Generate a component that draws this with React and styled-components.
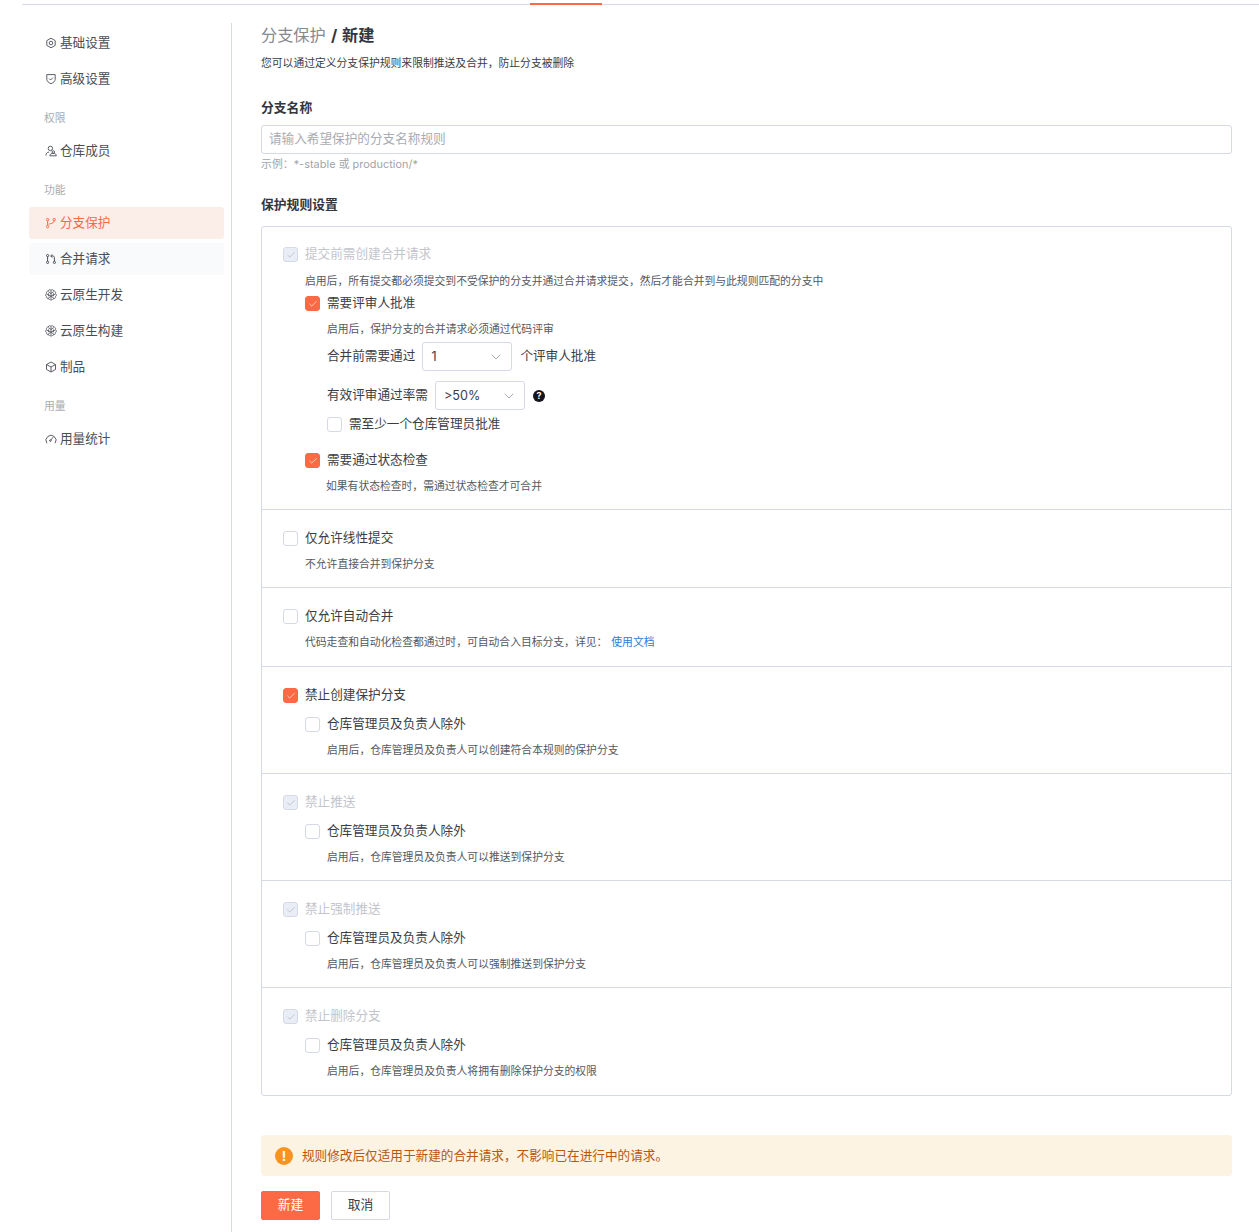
import styled, { createGlobalStyle } from "styled-components";
import { Check, ChevronDown } from "lucide-react";

const GlobalStyle = createGlobalStyle`
  * {
    box-sizing: border-box;
  }
  html,
  body {
    margin: 0;
    padding: 0;
    background: #fff;
    overflow: hidden;
  }
  body {
    font-family: "Inter", "Noto Sans CJK SC", sans-serif;
    font-weight: 400;
    color: #3a3d44;
  }
`;

const ORANGE = "#fc6a45";
const LINE = "#d5d9e6";

const Page = styled.div`
  height: 1232px;
  display: flex;
  flex-direction: column;
`;

const TopBar = styled.div`
  margin-left: 22px;
  height: 5px;
  padding-left: 508px;
  border-bottom: 1px solid ${LINE};
`;

const TabMark = styled.div`
  width: 72px;
  height: 2px;
  margin-top: 3px;
  background: ${ORANGE};
`;

const Body = styled.div`
  flex: 1;
  display: flex;
  margin-top: 18px;
  min-height: 0;
`;

const Sidebar = styled.nav`
  width: 232px;
  padding: 4px 7px 0 29px;
  border-right: 1px solid ${LINE};
  flex-shrink: 0;
`;

const NavItem = styled.div`
  height: 32px;
  margin-bottom: 4px;
  padding: 0 0 3px 16px;
  display: flex;
  align-items: center;
  gap: 3px;
  border-radius: 3px;
  font-size: 12.64px;
  color: ${(p) => (p.$active ? ORANGE : "#4a4d55")};
  background: ${(p) => (p.$active ? "#fbeee9" : p.$hover ? "#f9fafc" : "transparent")};

  svg {
    width: 12px;
    height: 12px;
    margin-top: 3px;
    flex-shrink: 0;
  }
`;

const NavLabel = styled.div`
  height: 36px;
  padding: 1px 0 1px 15px;
  display: flex;
  align-items: center;
  font-size: 10.8px;
  color: #a9acb3;
`;

const Main = styled.main`
  flex: 1;
  padding: 0 27px 0 29px;
  min-width: 0;
`;

const Title = styled.h1`
  margin: 0;
  font-size: 16.2px;
  line-height: 24px;
  font-weight: 400;
  word-spacing: 0.8px;
  color: #85888f;

  b {
    font-weight: 700;
    color: #33363c;
  }
`;

const Intro = styled.p`
  margin: 9px 0 0;
  font-size: 10.8px;
  line-height: 16px;
  color: #3a3d44;
`;

const FieldLabel = styled.div`
  margin-top: ${(p) => p.$top}px;
  font-size: 12.8px;
  line-height: 18px;
  font-weight: 700;
  color: #33363c;
`;

const TextInput = styled.input`
  display: block;
  width: 100%;
  height: 29px;
  margin-top: 8px;
  padding: 0 7px 3px;
  border: 1px solid ${LINE};
  border-radius: 3px;
  outline: none;
  font-family: inherit;
  font-weight: 400;
  font-size: 12.64px;

  &::placeholder {
    color: #a9acb3;
  }
`;

const Hint = styled.div`
  margin-top: 3px;
  font-size: 10.8px;
  line-height: 16px;
  letter-spacing: 0.08px;
  color: #a0a3aa;
`;

const RuleBox = styled.div`
  margin-top: 12px;
  border: 1px solid ${LINE};
  border-radius: 3px;
`;

const Section = styled.section`
  padding: ${(p) => p.$top ?? 18}px 21px ${(p) => p.$bottom ?? 14}px;
  border-bottom: 1px solid ${LINE};

  &:last-child {
    border-bottom: none;
  }
`;

const CheckRow = styled.label`
  display: flex;
  align-items: center;
  gap: 7px;
  height: 20px;
  padding-bottom: 3px;
  margin-top: ${(p) => p.$top ?? 0}px;
  margin-left: ${(p) => p.$indent ?? 0}px;
  font-size: 12.64px;
  color: ${(p) => (p.$muted ? "#c3c5cb" : "#3a3d44")};
`;

const Tick = styled.span`
  width: 15px;
  height: 15px;
  margin-top: 4px;
  flex-shrink: 0;
  display: flex;
  align-items: center;
  justify-content: center;
  border-radius: 3px;
  border: 1px solid ${(p) => (p.$state === "on" ? ORANGE : LINE)};
  background: ${(p) =>
    p.$state === "on" ? ORANGE : p.$state === "locked" ? "#e9edf5" : "#fff"};
  color: ${(p) => (p.$state === "on" ? "#fff" : "#a7adba")};

  svg {
    width: 10px;
    height: 10px;
  }
`;

const Desc = styled.p`
  margin: ${(p) => (p.$top ?? 7) + 2}px 0 0 ${(p) => p.$indent ?? 22}px;
  font-size: 10.8px;
  line-height: 16px;
  color: #55585f;
`;

const DocLink = styled.a`
  margin-left: 4px;
  color: #2b7bd9;
`;

const SelectRow = styled.div`
  display: flex;
  align-items: center;
  gap: 7px;
  margin: ${(p) => p.$top}px 0 0 44px;
  font-size: 12.64px;
  color: #3a3d44;
`;

const Select = styled.div`
  width: 90px;
  height: 29px;
  padding: 0 7px 1px 8px;
  display: flex;
  align-items: center;
  justify-content: space-between;
  border: 1px solid ${LINE};
  border-radius: 3px;
  font-size: 12.64px;

  svg {
    width: 16px;
    height: 16px;
    margin-top: 1px;
    color: #a7abb5;
  }
`;

const FieldText = styled.span`
  margin-top: -4px;
`;

const AfterSelect = styled(FieldText)`
  margin-left: 1px;
`;

const HelpDot = styled.span`
  width: 12px;
  height: 12px;
  margin-left: 1px;
  border-radius: 50%;
  background: #14161b;
  color: #fff;
  font-size: 9px;
  font-weight: 700;
  line-height: 12px;
  text-align: center;
`;

const Notice = styled.div`
  height: 41px;
  margin-top: 39px;
  padding: 0 0 3px 14px;
  display: flex;
  align-items: center;
  gap: 9px;
  border-radius: 4px;
  background: #fcf3e2;
  font-size: 12.64px;
  color: #b9560f;
`;

const NoticeIcon = styled.span`
  width: 18px;
  height: 18px;
  margin-top: 3px;
  border-radius: 50%;
  background: #f7931e;
  color: #fff;
  font-size: 13px;
  font-weight: 700;
  line-height: 18px;
  text-align: center;
`;

const Actions = styled.div`
  display: flex;
  gap: 11px;
  margin-top: 15px;
`;

const Button = styled.button`
  width: 59px;
  height: 29px;
  padding: 0 0 5px;
  border-radius: 2px;
  border: 1px solid ${(p) => (p.$primary ? ORANGE : LINE)};
  background: ${(p) => (p.$primary ? ORANGE : "#fff")};
  color: ${(p) => (p.$primary ? "#fff" : "#3a3d44")};
  font-family: inherit;
  font-weight: 400;
  font-size: 12.8px;
`;

const HexIcon = () => (
  <svg viewBox="0 0 12 12" fill="none" stroke="currentColor" strokeWidth="0.9">
    <path d="M6 1.200l4.200 2.400v4.800L6 10.800 1.800 8.400V3.600z" />
    <circle cx="6" cy="6" r="1.800" />
  </svg>
);

const ShieldIcon = () => (
  <svg viewBox="0 0 12 12" fill="none" stroke="currentColor" strokeWidth="0.9">
    <path d="M1.800 1.600h8.400v4.600c0 2.200-1.900 3.500-4.200 4.500-2.300-1-4.200-2.300-4.200-4.500z" />
    <path d="M4.200 5.600l1.400 1.400L8 4.600" />
  </svg>
);

const UsersIcon = () => (
  <svg viewBox="0 0 12 12" fill="none" stroke="currentColor" strokeWidth="0.9">
    <circle cx="5.400" cy="3.400" r="2.200" />
    <path d="M1 10.600c-.2-2 1-3.400 3.100-3.600" />
    <circle cx="8.300" cy="7" r="1.300" />
    <path d="M4.900 10.800h6.400c.2-1.400-1.200-2.500-3.200-2.500s-3.400 1.100-3.200 2.500z" />
  </svg>
);

const BranchIcon = () => (
  <svg viewBox="0 0 12 12" fill="none" stroke="currentColor" strokeWidth="1">
    <circle cx="2.600" cy="2.600" r="1.200" />
    <circle cx="2.600" cy="9.600" r="1.200" />
    <circle cx="9.200" cy="2.600" r="1.200" />
    <path d="M2.600 3.800v4.600M9.200 3.800c0 2.400-3 2.600-5.500 3.400" />
  </svg>
);

const MergeIcon = () => (
  <svg viewBox="0 0 12 12" fill="none" stroke="currentColor" strokeWidth="1">
    <circle cx="2.600" cy="2.600" r="1.100" />
    <circle cx="2.600" cy="9.400" r="1.100" />
    <circle cx="9.400" cy="9.400" r="1.100" />
    <path d="M2.600 3.700v4.600M9.400 8.300V4.500c0-1-.6-1.500-1.600-1.500H6M7.200 1.400L5.600 3l1.600 1.600" />
  </svg>
);

const CloudIcon = () => (
  <svg viewBox="0 0 12 12" fill="none" stroke="currentColor" strokeWidth="0.8">
    <path d="M6 1.300C5 .3 3.400.7 3.200 2 1.800 2 1 3.300 1.600 4.500.3 5.300.4 7.200 1.700 7.800c-.2 1.400 1 2.400 2.300 2 .5 1 1.400 1.400 2 1 .6.4 1.500 0 2-1 1.300.4 2.500-.6 2.300-2 1.300-.6 1.400-2.500.1-3.300.6-1.200-.2-2.500-1.600-2.500C8.600.7 7 .3 6 1.300z" />
    <path d="M6 1.300v9.400M3.200 2.600L6 4.400l2.800-1.800M1.700 5.200L6 7l4.300-1.800M3 9.400L6 7l3 2.400M3.600 4.300v2.900M8.400 4.300v2.900" />
  </svg>
);

const GaugeIcon = () => (
  <svg viewBox="0 0 12 12" fill="none" stroke="currentColor" strokeWidth="0.9">
    <path d="M1.900 10.200A5 5 0 1 1 10.100 10.200" />
    <path d="M5.700 7.300L8.100 4.200" />
    <circle cx="5.400" cy="7.600" r="0.800" />
  </svg>
);

const BoxIcon = () => (
  <svg viewBox="0 0 12 12" fill="none" stroke="currentColor" strokeWidth="0.9">
    <path d="M6 1l4.500 2.500v5L6 11 1.500 8.500v-5z" />
    <path d="M1.500 3.500L6 6l4.500-2.500M6 6v5" />
  </svg>
);

const Checkbox = ({ state }) => (
  <Tick $state={state}>{state !== "off" && <Check strokeWidth={1.5} />}</Tick>
);

const exemptRules = [
  { title: "禁止推送", desc: "启用后，仓库管理员及负责人可以推送到保护分支" },
  { title: "禁止强制推送", desc: "启用后，仓库管理员及负责人可以强制推送到保护分支" },
  { title: "禁止删除分支", desc: "启用后，仓库管理员及负责人将拥有删除保护分支的权限", bottom: 15 },
];

const App = () => {
  return (
    <Page>
      <GlobalStyle />
      <TopBar>
        <TabMark />
      </TopBar>
      <Body>
        <Sidebar>
          <NavItem><HexIcon />基础设置</NavItem>
          <NavItem><ShieldIcon />高级设置</NavItem>
          <NavLabel>权限</NavLabel>
          <NavItem><UsersIcon />仓库成员</NavItem>
          <NavLabel>功能</NavLabel>
          <NavItem $active><BranchIcon />分支保护</NavItem>
          <NavItem $hover><MergeIcon />合并请求</NavItem>
          <NavItem><CloudIcon />云原生开发</NavItem>
          <NavItem><CloudIcon />云原生构建</NavItem>
          <NavItem><BoxIcon />制品</NavItem>
          <NavLabel>用量</NavLabel>
          <NavItem><GaugeIcon />用量统计</NavItem>
        </Sidebar>
        <Main>
          <Title>
            分支保护 <b>/ 新建</b>
          </Title>
          <Intro>您可以通过定义分支保护规则来限制推送及合并，防止分支被删除</Intro>
          <FieldLabel $top={27}>分支名称</FieldLabel>
          <TextInput placeholder="请输入希望保护的分支名称规则" />
          <Hint>示例：*-stable 或 production/*</Hint>
          <FieldLabel $top={23}>保护规则设置</FieldLabel>
          <RuleBox>
            <Section $top={17}>
              <CheckRow $muted>
                <Checkbox state="locked" />
                提交前需创建合并请求
              </CheckRow>
              <Desc $top={8}>
                启用后，所有提交都必须提交到不受保护的分支并通过合并请求提交，然后才能合并到与此规则匹配的分支中
              </Desc>
              <CheckRow $indent={22} $top={3}>
                <Checkbox state="on" />
                需要评审人批准
              </CheckRow>
              <Desc $indent={44}>启用后，保护分支的合并请求必须通过代码评审</Desc>
              <SelectRow $top={4}>
                <FieldText>合并前需要通过</FieldText>
                <Select>
                  1
                  <ChevronDown strokeWidth={1.5} />
                </Select>
                <AfterSelect>个评审人批准</AfterSelect>
              </SelectRow>
              <SelectRow $top={10}>
                <FieldText>有效评审通过率需</FieldText>
                <Select>
                  &gt;50%
                  <ChevronDown strokeWidth={1.5} />
                </Select>
                <HelpDot>?</HelpDot>
              </SelectRow>
              <CheckRow $indent={44} $top={4}>
                <Checkbox state="off" />
                需至少一个仓库管理员批准
              </CheckRow>
              <CheckRow $indent={22} $top={16}>
                <Checkbox state="on" />
                需要通过状态检查
              </CheckRow>
              <Desc $indent={43}>如果有状态检查时，需通过状态检查才可合并</Desc>
            </Section>
            <Section>
              <CheckRow>
                <Checkbox state="off" />
                仅允许线性提交
              </CheckRow>
              <Desc>不允许直接合并到保护分支</Desc>
            </Section>
            <Section $bottom={15}>
              <CheckRow>
                <Checkbox state="off" />
                仅允许自动合并
              </CheckRow>
              <Desc>
                代码走查和自动化检查都通过时，可自动合入目标分支，详见：
                <DocLink>使用文档</DocLink>
              </Desc>
            </Section>
            <Section>
              <CheckRow>
                <Checkbox state="on" />
                禁止创建保护分支
              </CheckRow>
              <CheckRow $indent={22} $top={9}>
                <Checkbox state="off" />
                仓库管理员及负责人除外
              </CheckRow>
              <Desc $indent={44}>启用后，仓库管理员及负责人可以创建符合本规则的保护分支</Desc>
            </Section>
            {exemptRules.map((rule) => (
              <Section key={rule.title} $bottom={rule.bottom}>
                <CheckRow $muted>
                  <Checkbox state="locked" />
                  {rule.title}
                </CheckRow>
                <CheckRow $indent={22} $top={9}>
                  <Checkbox state="off" />
                  仓库管理员及负责人除外
                </CheckRow>
                <Desc $indent={44}>{rule.desc}</Desc>
              </Section>
            ))}
          </RuleBox>
          <Notice>
            <NoticeIcon>!</NoticeIcon>
            规则修改后仅适用于新建的合并请求，不影响已在进行中的请求。
          </Notice>
          <Actions>
            <Button $primary>新建</Button>
            <Button>取消</Button>
          </Actions>
        </Main>
      </Body>
    </Page>
  );
};

export default App;
